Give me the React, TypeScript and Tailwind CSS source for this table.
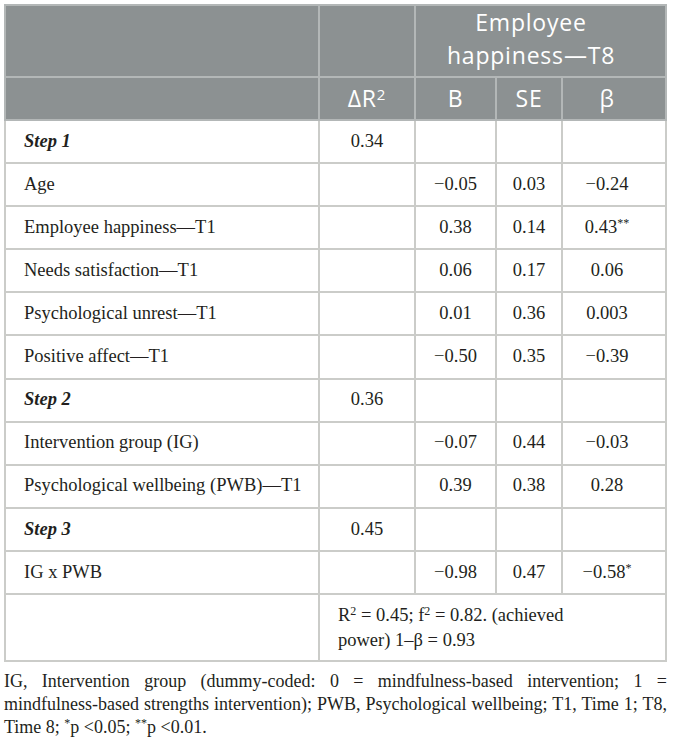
const rows: { label: string; step?: boolean; r2?: string; b?: string; se?: string; beta?: string }[] = [
  { label: "Step 1", step: true, r2: "0.34" },
  { label: "Age", b: "\u22120.05", se: "0.03", beta: "\u22120.24" },
  { label: "Employee happiness\u2014T1", b: "0.38", se: "0.14", beta: "0.43**" },
  { label: "Needs satisfaction\u2014T1", b: "0.06", se: "0.17", beta: "0.06" },
  { label: "Psychological unrest\u2014T1", b: "0.01", se: "0.36", beta: "0.003" },
  { label: "Positive affect\u2014T1", b: "\u22120.50", se: "0.35", beta: "\u22120.39" },
  { label: "Step 2", step: true, r2: "0.36" },
  { label: "Intervention group (IG)", b: "\u22120.07", se: "0.44", beta: "\u22120.03" },
  { label: "Psychological wellbeing (PWB)\u2014T1", b: "0.39", se: "0.38", beta: "0.28" },
  { label: "Step 3", step: true, r2: "0.45" },
  { label: "IG x PWB", b: "\u22120.98", se: "0.47", beta: "\u22120.58*" },
];

const line = "border-2 border-[#cbccc9]";
const cell = line + " text-center";
const head = "border-2 border-[#b3b7b7] text-center font-normal";

function Stars({ v }: { v?: string }) {
  if (!v) return null;
  const m = v.match(/^([^*]*)(\**)$/);
  if (!m || !m[2]) return <>{v}</>;
  return (
    <>
      {m[1]}
      <sup className="text-[12px]">{m[2]}</sup>
    </>
  );
}

export default function App() {
  return (
    <div className="bg-white w-[673px] h-[741px] pt-[4px] px-[4px] font-['Liberation_Serif',serif] text-[18.5px] text-[#231f20]">
      <table className="w-[663px] table-fixed border-collapse border-2 border-[#cbccc9]">
        <colgroup>
          <col className="w-[314px]" />
          <col className="w-[96px]" />
          <col className="w-[81px]" />
          <col className="w-[66px]" />
          <col />
        </colgroup>
        <thead className="bg-[#8c9192] text-white font-['Open_Sans',sans-serif] text-[23px] tracking-[0.8px]">
          <tr className="h-[71px]">
            <th className={head}></th>
            <th className={head}></th>
            <th className={head + " leading-[33px] pr-[19px] pb-[4px]"} colSpan={3}>
              Employee
              <br />
              happiness{"\u2014"}T8
            </th>
          </tr>
          <tr className="h-[43px]">
            <th className={head}></th>
            <th className={head}>
              {"\u0394"}R<sup className="text-[15px]">2</sup>
            </th>
            <th className={head}>B</th>
            <th className={head}>SE</th>
            <th className={head + " pr-[14px]"}>{"\u03b2"}</th>
          </tr>
        </thead>
        <tbody>
          {rows.map((r) => (
            <tr key={r.label} className="h-[43.1px]">
              <td className={line + " pl-[18px] " + (r.step ? "italic font-bold" : "")}>{r.label}</td>
              <td className={cell}>{r.r2}</td>
              <td className={cell}>{r.b}</td>
              <td className={cell}>{r.se}</td>
              <td className={cell + " pr-[14px]"}>
                <Stars v={r.beta} />
              </td>
            </tr>
          ))}
          <tr className="h-[67px]">
            <td className={line}></td>
            <td className={line + " pl-[18px] py-[7px] leading-[25px] whitespace-nowrap"} colSpan={4}>
              R<sup className="text-[12px]">2</sup> = 0.45; f<sup className="text-[12px]">2</sup> = 0.82. (achieved
              <br />
              power) 1{"\u2013"}{"\u03b2"} = 0.93
            </td>
          </tr>
        </tbody>
      </table>
      <div className="mt-[8px] text-[18px] leading-[23px] pr-[2px]">
        <p className="text-justify [text-align-last:justify] whitespace-nowrap">
          IG, Intervention group (dummy-coded: 0 = mindfulness-based intervention; 1 =
        </p>
        <p className="text-justify [text-align-last:justify] whitespace-nowrap">
          mindfulness-based strengths intervention); PWB, Psychological wellbeing; T1, Time 1; T8,
        </p>
        <p>
          Time 8; <sup className="text-[12px]">*</sup>p {"<"}0.05; <sup className="text-[12px]">**</sup>p {"<"}0.01.
        </p>
      </div>
    </div>
  );
}
